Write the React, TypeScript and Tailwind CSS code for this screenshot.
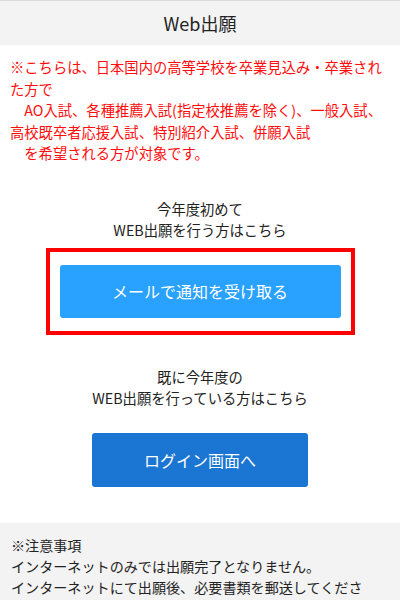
import React from 'react';

const jp = { fontFamily: '"Noto Sans CJK JP", "Noto Sans", sans-serif' };
const indent = '\u3000';

const App: React.FC = () => {
  return (
    <div className="w-[400px] min-h-[600px] bg-white" style={jp}>
      {/* Header */}
      <header className="h-[45px] bg-[#f3f3f3] border-t border-[#dcdcdc] flex items-center justify-center">
        <h1 className="text-[18px] text-[#222] leading-none">Web出願</h1>
      </header>

      {/* Eligibility notice */}
      <p className="pt-[11px] pl-[10px] pr-[10px] text-[14.3px] leading-[21.5px] text-[#ff0d0d]">
        ※こちらは、日本国内の高等学校を卒業見込み・卒業された方で
        <br />
        {indent}AO入試、各種推薦入試(指定校推薦を除く)、一般入試、
        <br />
        高校既卒者応援入試、特別紹介入試、併願入試
        <br />
        {indent}を希望される方が対象です。
      </p>

      {/* First-time applicants */}
      <div className="mt-[34px] flex flex-col items-center">
        <p className="text-[14.3px] leading-[21px] text-[#222] text-center">
          今年度初めて
          <br />
          WEB出願を行う方はこちら
        </p>
        <div className="mt-[8px] w-[309px] border-[4px] border-[#ff0000] px-[10px] py-[13px]">
          <button className="w-full h-[53px] rounded-[3px] bg-[#29a1ff] text-white text-[16px]">
            メールで通知を受け取る
          </button>
        </div>
      </div>

      {/* Returning applicants */}
      <div className="mt-[31px] flex flex-col items-center">
        <p className="text-[14.3px] leading-[21px] text-[#222] text-center">
          既に今年度の
          <br />
          WEB出願を行っている方はこちら
        </p>
        <button className="mt-[25px] w-[216px] h-[54px] rounded-[3px] bg-[#1a75d3] text-white text-[16px]">
          ログイン画面へ
        </button>
      </div>

      {/* Notes */}
      <div className="mt-[36px] bg-[#f3f3f3] pt-[12px] pb-[16px] pl-[11px] pr-[24px] text-[14.1px] leading-[21px] text-[#222]">
        <p>※注意事項</p>
        <p>インターネットのみでは出願完了となりません。</p>
        <p>インターネットにて出願後、必要書類を郵送してください。</p>
      </div>
    </div>
  );
};

export default App;
